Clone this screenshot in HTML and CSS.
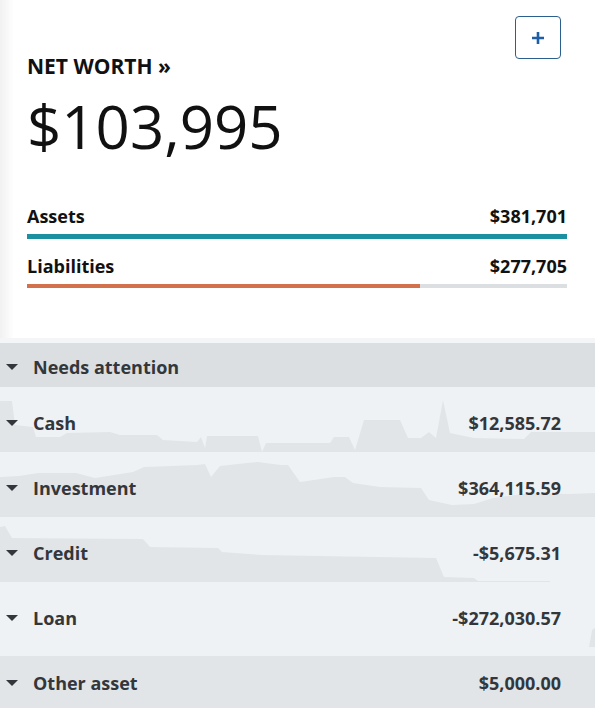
FILE: index.html
```html
<!DOCTYPE html>
<html lang="en">
<head>
  <meta charset="UTF-8" />
  <meta name="viewport" content="width=device-width, initial-scale=1.0" />
  <title>Net Worth</title>
  <link rel="stylesheet" href="styles.css">
</head>

<body>
  <div class="page">
    <section class="summary">
      <div class="summary-head">
        <h2 class="title">NET WORTH &raquo;</h2>
        <button class="add-btn" aria-label="Add account">
          <svg width="14" height="14" viewBox="0 0 14 14"><path d="M7 1v12M1 7h12" /></svg>
        </button>
      </div>

      <div class="total">$103,995</div>

      <div class="split-row">
        <span>Assets</span>
        <span>$381,701</span>
      </div>
      <div class="bar bar-assets"><div class="bar-fill" style="width: 100%"></div></div>

      <div class="split-row">
        <span>Liabilities</span>
        <span>$277,705</span>
      </div>
      <div class="bar bar-liabilities"><div class="bar-fill" style="width: 72.8%"></div></div>
    </section>

    <div class="group-head">
      <span class="caret"></span>
      <span>Needs attention</span>
    </div>

    <ul class="accounts">
      <li class="account">
        <svg class="spark" viewBox="0 0 595 65" preserveAspectRatio="none">
          <path d="M0 65 L0 14 L12 14 L15 38 L33 40 L36 50 L60 50 L67 46 L110 45 L120 48 L157 48 L163 53 L197 55 L201 50 L205 61 L207 49 L258 49 L262 65 L266 56 L330 56 L334 50 L349 50 L355 63 L364 33 L400 33 L408 51 L421 51 L429 45 L436 51 L443 13 L450 46 L474 51 L524 52 L531 45 L595 45 L595 65 Z" />
        </svg>
        <span class="caret"></span>
        <span class="account-name">Cash</span>
        <span class="account-amount">$12,585.72</span>
      </li>
      <li class="account">
        <svg class="spark" viewBox="0 0 595 65" preserveAspectRatio="none">
          <path d="M0 65 L0 25 L19 24 L38 21 L76 21 L95 26 L133 20 L144 15 L197 13 L205 12 L211 25 L220 14 L247 11 L258 10 L281 13 L288 13 L300 30 L334 25 L345 25 L353 31 L380 35 L421 36 L429 48 L452 53 L474 52 L493 46 L531 41 L569 42 L595 41 L595 65 Z" />
        </svg>
        <span class="caret"></span>
        <span class="account-name">Investment</span>
        <span class="account-amount">$364,115.59</span>
      </li>
      <li class="account">
        <svg class="spark" viewBox="0 0 595 65" preserveAspectRatio="none">
          <path d="M0 65 L0 10 L5 9 L12 21 L143 22 L150 30 L218 31 L222 35 L262 38 L436 41 L444 60 L474 61 L478 64 L550 64 L550 65 Z" />
        </svg>
        <span class="caret"></span>
        <span class="account-name">Credit</span>
        <span class="account-amount">-$5,675.31</span>
      </li>
      <li class="account">
        <svg class="spark" viewBox="0 0 595 65" preserveAspectRatio="none">
          <path d="M589 65 L592 48 L595 46 L595 65 Z" />
        </svg>
        <span class="caret"></span>
        <span class="account-name">Loan</span>
        <span class="account-amount">-$272,030.57</span>
      </li>
      <li class="account">
        <svg class="spark" viewBox="0 0 595 65" preserveAspectRatio="none">
          <path d="M0 65 L0 9 L595 9 L595 65 Z" />
        </svg>
        <span class="caret"></span>
        <span class="account-name">Other asset</span>
        <span class="account-amount">$5,000.00</span>
      </li>
    </ul>
  </div>
</body>
</html>
```

FILE: styles.css
```css
body {
  margin: 0;
  font-family: "Open Sans", "Liberation Sans", sans-serif;
  background: #fff;
  color: #111;
}

.page {
  width: 595px;
  overflow: hidden;
}

.summary {
  padding: 16px 28px 50px 27px;
  background: linear-gradient(to right, #f1f1f1, #fff 14px);
  border-bottom: 5px solid #f4f5f6;
}

.summary-head {
  display: flex;
  justify-content: space-between;
  align-items: flex-start;
}

.title {
  margin: 38px 0 0;
  font-size: 21px;
  line-height: 24px;
  font-weight: 700;
  color: #111;
}

.add-btn {
  width: 46px;
  height: 43px;
  margin-right: 6px;
  padding: 0;
  display: flex;
  align-items: center;
  justify-content: center;
  background: #fff;
  border: 1px solid #2b5f8e;
  border-radius: 4px;
  cursor: pointer;
}

.add-btn path {
  stroke: #1f5ea6;
  stroke-width: 2.6;
  fill: none;
}

.total {
  margin-top: 18px;
  font-size: 60px;
  line-height: 60px;
  font-weight: 400;
  color: #111;
}

.split-row {
  display: flex;
  justify-content: space-between;
  font-size: 18px;
  line-height: 22px;
  font-weight: 700;
  color: #111;
  margin-top: 49px;
}

.split-row + .bar + .split-row {
  margin-top: 16px;
}

.bar {
  margin-top: 7px;
  height: 5px;
  background: #dcdfe2;
}

.bar-fill {
  height: 100%;
}

.bar-assets .bar-fill {
  background: #1a90a0;
}

.bar-liabilities {
  height: 4px;
}

.bar-liabilities .bar-fill {
  background: #d2714b;
}

.caret {
  width: 0;
  height: 0;
  border-left: 6px solid transparent;
  border-right: 6px solid transparent;
  border-top: 6px solid #33373b;
  margin: 0 15px 0 6px;
}

.group-head {
  height: 44px;
  box-sizing: border-box;
  padding-top: 3px;
  display: flex;
  align-items: center;
  background: #dcdfe2;
  font-size: 18px;
  font-weight: 700;
  color: #33373b;
}

.accounts {
  list-style: none;
  margin: 0;
  padding: 0;
}

.account {
  position: relative;
  height: 65px;
  box-sizing: border-box;
  padding: 7px 34px 0 0;
  display: flex;
  align-items: center;
  background: #eff2f5;
  font-size: 18px;
  font-weight: 700;
  color: #33373b;
}

.spark {
  position: absolute;
  left: 0;
  top: 0;
  width: 100%;
  height: 100%;
}

.spark path {
  fill: #e2e5e8;
}

.account .caret,
.account-name,
.account-amount {
  position: relative;
}

.account-amount {
  margin-left: auto;
}
```
